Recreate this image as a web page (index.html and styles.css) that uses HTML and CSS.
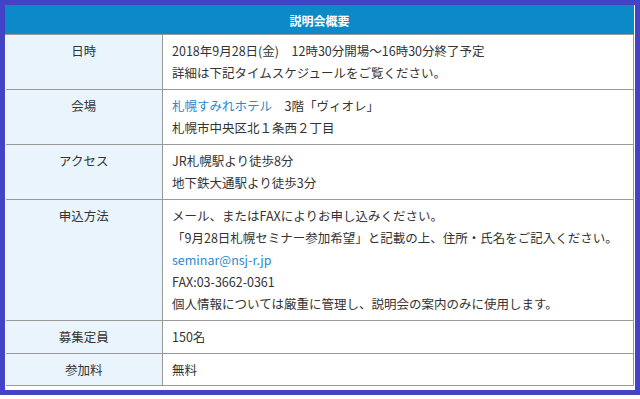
FILE: index.html
```html
<!DOCTYPE html>
<html lang="ja">
<head>
<meta charset="utf-8">
<link rel="stylesheet" href="styles.css">
</head>
<body>
<div class="frame">
  <div class="inner">
    <table class="info">
      <colgroup>
        <col class="col-label">
        <col class="col-value">
      </colgroup>
      <thead>
        <tr><th colspan="2" class="head">説明会概要</th></tr>
      </thead>
      <tbody>
        <tr>
          <th>日時</th>
          <td>2018年9月28日(金)　12時30分開場～16時30分終了予定<br>詳細は下記タイムスケジュールをご覧ください。</td>
        </tr>
        <tr>
          <th>会場</th>
          <td><a class="link">札幌すみれホテル</a>　3階「ヴィオレ」<br>札幌市中央区北１条西２丁目</td>
        </tr>
        <tr>
          <th>アクセス</th>
          <td>JR札幌駅より徒歩8分<br>地下鉄大通駅より徒歩3分</td>
        </tr>
        <tr>
          <th>申込方法</th>
          <td>メール、またはFAXによりお申し込みください。<br>「9月28日札幌セミナー参加希望」と記載の上、住所・氏名をご記入ください。<br><a class="link">seminar@nsj-r.jp</a><br>FAX:03-3662-0361<br>個人情報については厳重に管理し、説明会の案内のみに使用します。</td>
        </tr>
        <tr>
          <th>募集定員</th>
          <td>150名</td>
        </tr>
        <tr>
          <th>参加料</th>
          <td>無料</td>
        </tr>
      </tbody>
    </table>
  </div>
</div>
</body>
</html>
```
FILE: styles.css
```css
html, body {
  margin: 0;
  padding: 0;
  background: #ffffff;
}
body {
  font-family: "Noto Sans CJK JP", "Noto Sans", sans-serif;
  font-size: 12.5px;
  color: #333333;
}
.frame {
  width: 630px;
  height: 385px;
  border: 5px solid #4343c8;
  background: #ffffff;
  overflow: hidden;
}
.inner {
  width: 628px;
}
.info {
  width: 628px;
  border-collapse: collapse;
  table-layout: fixed;
}
.col-label {
  width: 157px;
}
.col-value {
  width: 471px;
}
.info th.head {
  background: #0c8ac8;
  color: #ffffff;
  font-weight: bold;
  font-size: 12px;
  height: 28px;
  padding: 0;
  text-align: center;
  border: 1px solid #0c8ac8;
  border-bottom: 1px solid #999999;
}
.info tbody th {
  background: #eaf4fd;
  font-weight: normal;
  text-align: center;
  vertical-align: top;
  padding: 5px;
  line-height: 22px;
  border: 1px solid #999999;
  border-left: none;
}
.info td {
  vertical-align: top;
  padding: 5px 4px 5px 9px;
  line-height: 22px;
  border: 1px solid #999999;
  white-space: nowrap;
  background: #ffffff;
}
.info tbody tr:last-child th,
.info tbody tr:last-child td {
  padding-bottom: 4px;
}
.link {
  color: #2a88d0;
  text-decoration: none;
}
```
